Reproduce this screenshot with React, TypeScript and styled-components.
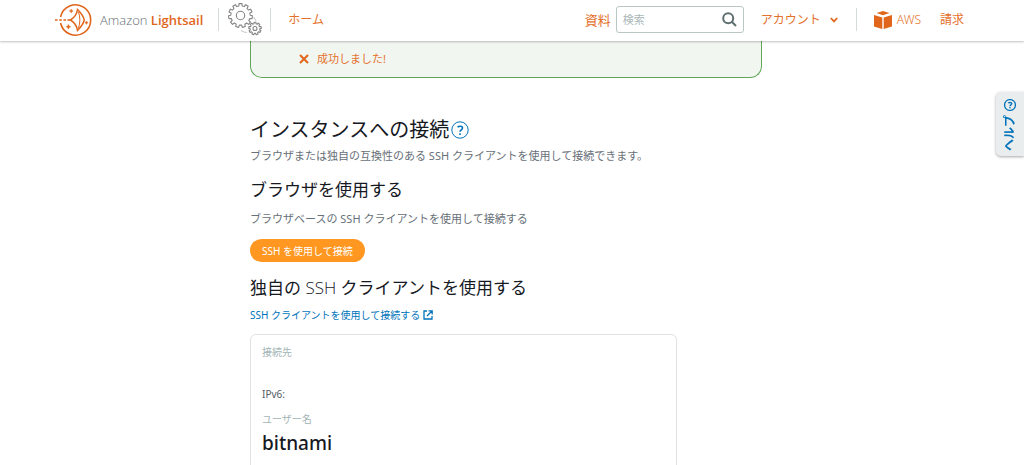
import React from "react";
import styled, { createGlobalStyle } from "styled-components";

const orange = "#e0661c";
const orangeText = "#e4712b";
const blue = "#0073bb";

const GlobalStyle = createGlobalStyle`
  * { box-sizing: border-box; }
  body {
    margin: 0;
    background: #fff;
    color: #16191f;
    font-family: "Noto Sans", "Noto Sans CJK JP", sans-serif;
    overflow: hidden;
  }
  svg { display: block; flex: none; }
`;

const Header = styled.header`
  position: sticky;
  top: 0;
  z-index: 2;
  display: flex;
  align-items: center;
  height: 41px;
  padding: 0 60px 2px 55px;
  background: #fff;
  box-shadow: 0 1px 2px rgba(0, 0, 0, 0.25);
`;

const Brand = styled.a`
  display: flex;
  align-items: center;
  gap: 8px;
  color: #687078;
  font-family: "Open Sans", sans-serif;
  font-size: 13px;
  font-weight: 300;
  text-decoration: none;
  white-space: nowrap;

  strong {
    color: ${orange};
    font-weight: 600;
  }
`;

const Divider = styled.span<{ $left: number; $right: number }>`
  width: 1px;
  height: 23px;
  margin: 0 ${(p) => p.$right}px 0 ${(p) => p.$left}px;
  background: #d5dbdb;
`;

const NavLink = styled.a<{ $light?: boolean; $large?: boolean }>`
  display: flex;
  align-items: center;
  gap: 5px;
  color: ${orangeText};
  font-size: ${(p) => (p.$large ? 13 : 12)}px;
  font-weight: ${(p) => (p.$light ? 300 : 400)};
  line-height: 20px;
  text-decoration: none;
  white-space: nowrap;
`;

const Nav = styled.nav`
  display: flex;
  align-items: center;
  margin-left: auto;
`;

const AccountLinks = styled.div`
  display: flex;
  gap: 19px;
`;

const AccountButton = styled.button`
  display: flex;
  align-items: center;
  gap: 9px;
  margin-left: 17px;
  padding: 0;
  border: 0;
  background: none;
  color: ${orangeText};
  font: inherit;
  font-size: 12px;
  line-height: 20px;
  white-space: nowrap;
`;

const Search = styled.form`
  display: flex;
  align-items: center;
  width: 128px;
  height: 27px;
  margin-left: 5px;
  padding: 0 6px;
  border: 1px solid #b8c6c6;
  border-radius: 3px;
`;

const SearchInput = styled.input`
  flex: 1;
  min-width: 0;
  padding: 0;
  border: 0;
  outline: 0;
  background: none;
  font: inherit;
  font-size: 11px;

  &::placeholder { color: #aab7b8; opacity: 1; }
`;

const IconButton = styled.button`
  display: inline-flex;
  padding: 0;
  border: 0;
  background: none;
  color: ${blue};
`;

const Page = styled.div`
  padding-right: 12px;
`;

const Main = styled.main`
  max-width: 512px;
  margin: 0 auto;
`;

const Notice = styled.div`
  display: flex;
  align-items: center;
  gap: 8px;
  padding: 10px 48px 10px;
  border: 1px solid #5fa657;
  border-top: 0;
  border-radius: 0 0 12px 12px;
  background: #f2f6f1;
  color: ${orangeText};
  font-size: 11px;
  line-height: 16px;
`;

const TitleRow = styled.div`
  display: flex;
  align-items: center;
  gap: 2px;
  margin-top: 37px;
`;

const Title = styled.h1`
  margin: 0;
  font-size: 20px;
  font-weight: 400;
  line-height: 30px;
`;

const Subtitle = styled.h2`
  margin: 0;
  font-size: 17px;
  font-weight: 400;
  line-height: 24px;
`;

const Light = styled.span`
  font-family: "Open Sans", sans-serif;
  font-weight: 300;
`;

const Text = styled.p`
  margin: 3px 0 14px;
  color: #687078;
  font-size: 11px;
  line-height: 16px;
`;

const BrowserText = styled(Text)`
  margin: 9px 0 12px;
`;

const ConnectButton = styled.button`
  display: block;
  height: 23px;
  margin-bottom: 14px;
  padding: 0 12px;
  border: 0;
  border-radius: 12px;
  background: #ff9721;
  color: #fff;
  font: inherit;
  font-size: 10px;
  line-height: 16px;
`;

const DocLink = styled.a`
  display: flex;
  align-items: center;
  gap: 3px;
  width: fit-content;
  margin-top: 7px;
  color: ${blue};
  font-size: 10px;
  line-height: 16px;
  text-decoration: none;
`;

const Details = styled.dl`
  max-width: 427px;
  margin: 11px 0 0;
  padding: 9px 11px 24px;
  border: 1px solid #dfe3e3;
  border-radius: 6px;
  font-size: 10px;
  line-height: 16px;
`;

const Term = styled.dt`
  color: #a3b5b5;
`;

const Address = styled.dd`
  margin: 0;
  padding: 26px 0 9px;
  color: #545b64;
`;

const UserName = styled.dd`
  margin: 0;
  font-size: 19px;
  font-weight: 500;
  line-height: 32px;
`;

const HelpTab = styled.button`
  position: fixed;
  top: 92px;
  right: 0;
  z-index: 1;
  display: flex;
  flex-direction: row-reverse;
  align-items: center;
  justify-content: flex-start;
  gap: 4px;
  width: 64px;
  height: 28px;
  padding: 0 7px 0 0;
  border: 0;
  border-radius: 5px 5px 0 0;
  background: #eaeded;
  box-shadow: -1px 0 3px rgba(0, 0, 0, 0.35);
  color: ${blue};
  font: inherit;
  font-size: 12px;
  font-weight: 600;
  line-height: 16px;
  transform-origin: 100% 0;
  transform: rotate(-90deg) translateY(-100%);

  svg { transform: rotate(90deg); }
`;

function SailLogo() {
  return (
    <svg width="37" height="34" viewBox="0 0 37 34" fill="none" stroke={orange} strokeWidth="1.6">
      <path d="M5.6 14A15.2 15.2 0 1 1 5.6 20" />
      <path d="M0 17h2.6M4.2 17h2.6M8.4 17h2.6M12.4 17h2.6" strokeWidth="1.4" />
      <path d="M22.500 6.500C22 10.500 19.500 14.500 15.500 17C19.500 19.500 22 23.500 22.500 27.500C25.500 24.500 28.500 20.500 29.300 17C28.500 13.500 25.500 9.500 22.500 6.500Z" strokeWidth="1.5" />
      <path d="M23.500 9C25.300 14 25.300 20 23.500 25" strokeWidth="1" />
      <path d="M16.200 6l.6 1.400 1.400.6-1.400.6-.6 1.400-.6-1.400-1.400-.6 1.400-.6zM13.400 21.500l.7 1.600 1.600.7-1.600.7-.7 1.600-.7-1.600-1.600-.7 1.600-.7zM31.500 18l.5 1.200 1.200.5-1.200.5-.5 1.200-.5-1.200-1.200-.5 1.200-.5z" fill={orange} strokeWidth=".5" />
    </svg>
  );
}

function gearPath(cx: number, cy: number, inner: number, outer: number, teeth: number) {
  const points: string[] = [];
  const step = (Math.PI * 2) / teeth;
  for (let i = 0; i < teeth; i++) {
    const offsets: [number, number][] = [[-0.3, inner], [-0.22, outer], [0.22, outer], [0.3, inner]];
    offsets.forEach(([k, r]) => {
      const a = i * step + k * step - Math.PI / 2;
      points.push(`${(cx + Math.cos(a) * r).toFixed(2)} ${(cy + Math.sin(a) * r).toFixed(2)}`);
    });
  }
  return `M${points.join("L")}Z`;
}

function GearsIcon() {
  return (
    <svg width="34" height="34" viewBox="0 0 34 34" fill="none" stroke="#858585" strokeWidth="1.1" strokeLinejoin="round">
      <path d={gearPath(12.5, 12.5, 9.7, 12, 11)} />
      <circle cx="12.500" cy="12.500" r="4.200" />
      <path d={gearPath(27, 25.5, 4.9, 6.3, 9)} />
      <circle cx="27" cy="25.500" r="2" />
      <path d="M13 27.500C15 29 17 29.500 19 29.500M25.500 14.500C27 15.500 27.800 16.500 28 18" stroke="#ccc" />
    </svg>
  );
}

function CubeIcon() {
  return (
    <svg width="18" height="18" viewBox="0 0 18 18" fill={orange}>
      <path d="M9 0l6.500 2L9 4.200 2.500 2zM0 4l8.300 2.500V18L0 15.500zM18 4L9.700 6.500V18l8.300-2.500z" />
    </svg>
  );
}

function QuestionIcon({ size, stroke, mark }: { size: number; stroke: number; mark: number }) {
  return (
    <svg width={size} height={size} viewBox="0 0 18 18" fill="none" stroke={blue}>
      <circle cx="9" cy="9" r="8.200" strokeWidth={stroke} />
      <path d="M6.600 6.300C7.700 4.900 11.500 4.700 11.500 7C11.500 8.800 9 8.800 9 10.800M9 12.200v1.700" strokeWidth={mark} />
    </svg>
  );
}

export default function App() {
  return (
    <>
      <GlobalStyle />
      <Header>
        <Brand href="#">
          <SailLogo />
          <span>Amazon <strong>Lightsail</strong></span>
        </Brand>
        <Divider $left={15} $right={9} />
        <GearsIcon />
        <Divider $left={8} $right={17} />
        <NavLink href="#">ホーム</NavLink>
        <Nav>
          <NavLink href="#" $large>資料</NavLink>
          <Search>
            <SearchInput type="search" placeholder="検索" aria-label="検索" />
            <IconButton type="submit" aria-label="検索">
              <svg width="15" height="15" viewBox="0 0 15 15" fill="none" stroke="#5f6f70" strokeWidth="2">
                <circle cx="6.200" cy="6.200" r="5" />
                <path d="M9.800 9.800L14 14" />
              </svg>
            </IconButton>
          </Search>
          <AccountButton type="button">
            アカウント
            <svg width="8" height="6" viewBox="0 0 8 6" fill="none" stroke={orange} strokeWidth="1.800">
              <path d="M.8 1L4 4.400 7.200 1" />
            </svg>
          </AccountButton>
          <Divider $left={18} $right={17} />
          <AccountLinks>
            <NavLink href="#" $light><CubeIcon />AWS</NavLink>
            <NavLink href="#">請求</NavLink>
          </AccountLinks>
        </Nav>
      </Header>
      <Page>
        <Main>
          <Notice role="status">
            <IconButton type="button" aria-label="閉じる">
              <svg width="10" height="10" viewBox="0 0 10 10" stroke={orange} strokeWidth="2">
                <path d="M1 1l8 8M9 1L1 9" />
              </svg>
            </IconButton>
            成功しました!
          </Notice>
          <TitleRow>
            <Title>インスタンスへの接続</Title>
            <IconButton type="button" aria-label="ヘルプ">
              <QuestionIcon size={18} stroke={1} mark={1.6} />
            </IconButton>
          </TitleRow>
          <Text>ブラウザまたは独自の互換性のある SSH クライアントを使用して接続できます。</Text>
          <Subtitle>ブラウザを使用する</Subtitle>
          <BrowserText>ブラウザベースの SSH クライアントを使用して接続する</BrowserText>
          <ConnectButton type="button">SSH を使用して接続</ConnectButton>
          <Subtitle>独自の <Light>SSH</Light> クライアントを使用する</Subtitle>
          <DocLink href="#">
            SSH クライアントを使用して接続する
            <svg width="10" height="10" viewBox="0 0 10 10" fill="none" stroke={blue} strokeWidth="1.300">
              <path d="M4 1H1v8h8V6M5.500 .8h3.700v3.700M9 1L4 6" />
            </svg>
          </DocLink>
          <Details>
            <Term>接続先</Term>
            <Address>IPv6:</Address>
            <Term>ユーザー名</Term>
            <UserName>bitnami</UserName>
          </Details>
        </Main>
      </Page>
      <HelpTab type="button">
        <QuestionIcon size={12} stroke={1.8} mark={2.2} />
        ヘルプ
      </HelpTab>
    </>
  );
}
